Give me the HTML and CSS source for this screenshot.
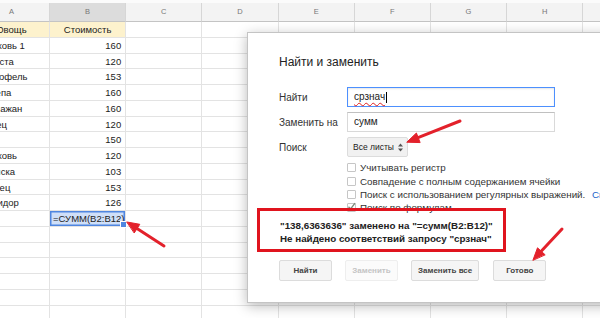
FILE: index.html
```html
<!DOCTYPE html>
<html lang="ru">
<head>
<meta charset="utf-8">
<title>Найти и заменить</title>
<link rel="stylesheet" href="styles.css">
</head>
<body>
<div class="screen">
  <div class="sheet">
    <div class="top"></div>
    <div class="row hdr"><i>A</i><i class="sel">B</i><i>C</i><i>D</i><i>E</i><i>F</i><i>G</i><i>H</i><i>I</i></div>
    <div class="row yel"><i class="c">Овощь</i><i class="c">Стоимость</i><i></i><i></i><i></i><i></i><i></i><i></i><i></i></div>
    <div class="row"><i class="t">Морковь 1</i><i class="n">160</i><i></i><i></i><i></i><i></i><i></i><i></i><i></i></div>
    <div class="row"><i class="t">Капуста</i><i class="n">120</i><i></i><i></i><i></i><i></i><i></i><i></i><i></i></div>
    <div class="row"><i class="t">Картофель</i><i class="n">153</i><i></i><i></i><i></i><i></i><i></i><i></i><i></i></div>
    <div class="row"><i class="t">Сурепа</i><i class="n">160</i><i></i><i></i><i></i><i></i><i></i><i></i><i></i></div>
    <div class="row"><i class="t">Баклажан</i><i class="n">160</i><i></i><i></i><i></i><i></i><i></i><i></i><i></i></div>
    <div class="row"><i class="t">Перец</i><i class="n">120</i><i></i><i></i><i></i><i></i><i></i><i></i><i></i></div>
    <div class="row"><i class="t">Лук</i><i class="n">150</i><i></i><i></i><i></i><i></i><i></i><i></i><i></i></div>
    <div class="row"><i class="t">Морковь</i><i class="n">120</i><i></i><i></i><i></i><i></i><i></i><i></i><i></i></div>
    <div class="row"><i class="t">Редиска</i><i class="n">103</i><i></i><i></i><i></i><i></i><i></i><i></i><i></i></div>
    <div class="row"><i class="t">Огурец</i><i class="n">153</i><i></i><i></i><i></i><i></i><i></i><i></i><i></i></div>
    <div class="row"><i class="t">Помидор</i><i class="n">126</i><i></i><i></i><i></i><i></i><i></i><i></i><i></i></div>
    <div class="row"><i class="t"></i><i class="f">=СУММ(B2:B12)</i><i></i><i></i><i></i><i></i><i></i><i></i><i></i></div>
    <div class="row"><i></i><i></i><i></i><i></i><i></i><i></i><i></i><i></i><i></i></div>
    <div class="row"><i></i><i></i><i></i><i></i><i></i><i></i><i></i><i></i><i></i></div>
    <div class="row"><i></i><i></i><i></i><i></i><i></i><i></i><i></i><i></i><i></i></div>
    <div class="row"><i></i><i></i><i></i><i></i><i></i><i></i><i></i><i></i><i></i></div>
    <div class="row"><i></i><i></i><i></i><i></i><i></i><i></i><i></i><i></i><i></i></div>
    <div class="row"><i></i><i></i><i></i><i></i><i></i><i></i><i></i><i></i><i></i></div>
  </div>

  <div class="dialog">
    <div class="title">Найти и заменить</div>
    <div class="form">
      <label class="lbl">Найти</label>
      <div class="input focus"><span class="spell">срзнач</span><span class="caret"></span></div>
      <label class="lbl">Заменить на</label>
      <div class="input">сумм</div>
      <label class="lbl">Поиск</label>
      <div class="select"><span>Все листы</span>
        <svg class="updown" width="5" height="9" viewBox="0 0 5 9"><path d="M0 3.5 L2.5 0.5 L5 3.5 Z M0 5.5 L2.5 8.5 L5 5.5 Z" fill="#555"/></svg>
      </div>
    </div>
    <div class="checks">
      <div class="chk"><span class="box"></span>Учитывать регистр</div>
      <div class="chk"><span class="box"></span>Совпадение с полным содержанием ячейки</div>
      <div class="chk"><span class="box"></span>Поиск с использованием регулярных выражений.&nbsp;<span class="link">Справка</span></div>
      <div class="chk"><span class="box on"><svg width="9" height="9" viewBox="0 0 9 9"><path d="M1.5 4.8 L3.6 7 L8 1.2" fill="none" stroke="#7a8a7a" stroke-width="1.3"/></svg></span>Поиск по формулам</div>
    </div>
    <div class="msg">
      <div>"138,6363636" заменено на "=сумм(B2:B12)"</div>
      <div>Не найдено соответствий запросу "срзнач"</div>
    </div>
    <div class="buttons">
      <div class="btn">Найти</div>
      <div class="btn dis">Заменить</div>
      <div class="btn">Заменить все</div>
      <div class="btn done">Готово</div>
    </div>
    <div class="redbox"></div>
  </div>

  <svg class="annot" width="600" height="318" viewBox="0 0 600 318">
    <g stroke="#e3212b" stroke-width="3" stroke-linecap="round" fill="#e3212b">
      <line x1="164" y1="246" x2="137" y2="228.5"/>
      <polygon points="127,222 139.8,224.3 134.4,232.7" stroke-width="1" stroke-linejoin="round"/>
      <line x1="460" y1="121" x2="418" y2="137.6"/>
      <polygon points="407,142 416.4,133 420,142.2" stroke-width="1" stroke-linejoin="round"/>
      <line x1="562" y1="229" x2="541.2" y2="251.2"/>
      <polygon points="533,260 537.5,247.8 544.9,254.6" stroke-width="1" stroke-linejoin="round"/>
    </g>
  </svg>
</div>
</body>
</html>
```
FILE: styles.css
```css
html, body {
  margin: 0;
  padding: 0;
}
body {
  width: 600px;
  height: 318px;
  overflow: hidden;
  font-family: "Liberation Sans", Arial, sans-serif;
  background: #fff;
}
.screen {
  position: relative;
  width: 600px;
  height: 318px;
  overflow: hidden;
  background: #fff;
}

/* spreadsheet */
.sheet {
  margin-left: -26.2px;
}
.top {
  height: 3px;
  background: #fbfbfb;
}
.row {
  display: grid;
  grid-template-columns: repeat(9, 76.2px);
  height: 15.75px;
}
.row > i {
  font-style: normal;
  box-sizing: border-box;
  border-right: 1px solid #e3e3e3;
  border-bottom: 1px solid #e3e3e3;
  padding: 0 4px;
  font-size: 9.5px;
  line-height: 15px;
  color: #222;
  white-space: nowrap;
  overflow: hidden;
}
.row.hdr {
  height: 19px;
}
.row.hdr > i {
  background: #f3f3f3;
  color: #777;
  text-align: center;
  font-size: 7.5px;
  line-height: 18px;
  border-right-color: #d6d6d6;
  border-bottom-color: #c4c4c4;
}
.row.hdr > i.sel {
  background: #dcdcdc;
}
.row.yel > i.c {
  background: #fdf2cd;
  text-align: center;
}
.row > i.t {
  padding-left: 5px;
}
.row > i.n {
  text-align: right;
}
.row > i.f {
  position: relative;
  overflow: visible;
  background: #cfdff8;
  box-shadow: inset 0 0 0 1.5px #4f86e0;
  padding-left: 3px;
}
.row > i.f::after {
  content: "";
  position: absolute;
  right: -2px;
  bottom: -2px;
  width: 5px;
  height: 5px;
  background: #4f86e0;
  border: 1px solid #fff;
}

/* dialog */
.dialog {
  position: absolute;
  left: 247px;
  top: 32px;
  width: 400px;
  height: 271px;
  box-sizing: border-box;
  background: #fff;
  border: 1px solid #c4c4c4;
  box-shadow: 0 3px 12px rgba(0, 0, 0, 0.28);
  padding: 22px 0 0 31px;
  color: #222;
}
.title {
  font-size: 12px;
  line-height: 14px;
  color: #222;
  margin-bottom: 18px;
}
.form {
  display: grid;
  grid-template-columns: 68px 208px;
  grid-auto-rows: 20px;
  row-gap: 5px;
  align-items: center;
}
.lbl {
  font-size: 10px;
  color: #333;
}
.input {
  box-sizing: border-box;
  height: 20px;
  border: 1px solid #d9d9d9;
  border-top-color: #c0c0c0;
  font-size: 10px;
  line-height: 18px;
  padding: 0 6px;
  color: #222;
  display: flex;
  align-items: center;
}
.input.focus {
  border-color: #4d90fe;
  box-shadow: inset 0 1px 2px rgba(0, 0, 0, 0.1);
}
.spell {
  text-decoration: underline wavy #e02020;
  text-decoration-thickness: 1px;
  text-underline-offset: 2px;
}
.caret {
  width: 1px;
  height: 11px;
  background: #000;
  margin-left: 1px;
}
.select {
  justify-self: start;
  box-sizing: border-box;
  width: 61px;
  height: 20px;
  background: #f1f1f1;
  border: 1px solid #dcdcdc;
  border-radius: 2px;
  font-size: 8.5px;
  color: #222;
  display: flex;
  align-items: center;
  justify-content: space-between;
  padding: 0 4px 0 5px;
  white-space: nowrap;
}
.updown {
  display: block;
  flex: none;
}
.checks {
  margin: 4.3px 0 0 68px;
}
.chk {
  height: 13.33px;
  display: flex;
  align-items: center;
  gap: 4px;
  font-size: 9.8px;
  color: #333;
  white-space: nowrap;
}
.box {
  box-sizing: border-box;
  width: 9px;
  height: 9px;
  border: 1px solid #c6c6c6;
  border-radius: 1px;
  background: #fff;
  position: relative;
  flex: none;
}
.box.on svg {
  position: absolute;
  left: -1px;
  top: -2px;
}
.link {
  color: #1a5fc9;
}
.msg {
  margin-top: 4px;
  padding-left: 1px;
  font-size: 9.8px;
  font-weight: bold;
  line-height: 13px;
  color: #222;
}
.buttons {
  margin-top: 15.5px;
  display: flex;
  gap: 13px;
}
.btn {
  box-sizing: border-box;
  min-width: 53px;
  height: 21px;
  padding: 0 6px;
  background: #f5f5f5;
  border: 1px solid #dcdcdc;
  border-radius: 2px;
  font-size: 8px;
  font-weight: bold;
  color: #444;
  display: flex;
  align-items: center;
  justify-content: center;
  white-space: nowrap;
}
.btn.done {
  margin-left: 1px;
}
.btn.dis {
  background: #fbfbfb;
  border-color: #eeeeee;
  color: #c4c4c4;
}
.redbox {
  position: absolute;
  left: 9px;
  top: 175px;
  width: 249px;
  height: 44px;
  box-sizing: border-box;
  border: 3px solid #e0141e;
}

.annot {
  position: absolute;
  left: 0;
  top: 0;
  pointer-events: none;
}
```
